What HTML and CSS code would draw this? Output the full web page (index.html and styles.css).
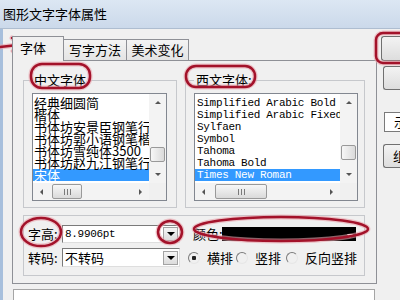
FILE: index.html
```html
<!DOCTYPE html>
<html lang="zh-CN">
<head>
    <meta charset="UTF-8">
    <title>图形文字字体属性</title>
    <link rel="stylesheet" href="styles.css">
</head>
<body>

<div class="window">
    <div class="titlebar">图形文字字体属性</div>

    <div class="body">
        <div class="main">
            <div class="tabs">
                <div class="tab tab-first active">字体</div>
                <div class="tab tab-mid">写字方法</div>
                <div class="tab tab-last">美术变化</div>
            </div>

            <div class="panel">
                <div class="fonts">
                    <fieldset class="group group-cn">
                        <legend>中文字体</legend>
                        <div class="listbox">
                            <div class="list-area">
                                <ul class="items">
                                    <li>经典细圆简</li>
                                    <li>楷体</li>
                                    <li>书体坊安景臣钢笔行</li>
                                    <li>书体坊郭小语钢笔楷</li>
                                    <li>书体坊雪纯体3500</li>
                                    <li>书体坊赵九江钢笔行</li>
                                    <li class="sel">宋体</li>
                                </ul>
                                <div class="vscroll">
                                    <div class="sb-btn"><span class="tri-up"></span></div>
                                    <div class="track"><div class="thumb-v"></div></div>
                                    <div class="sb-btn"><span class="tri-down"></span></div>
                                </div>
                            </div>
                            <div class="hscroll">
                                <div class="sb-btn"><span class="tri-left"></span></div>
                                <div class="htrack"><div class="thumb-h thumb-cn"><span class="grip"></span></div></div>
                                <div class="sb-btn"><span class="tri-right"></span></div>
                                <div class="corner"></div>
                            </div>
                        </div>
                    </fieldset>

                    <fieldset class="group group-en">
                        <legend>西文字体:</legend>
                        <div class="listbox">
                            <div class="list-area">
                                <ul class="items items-en">
                                    <li>Simplified Arabic Bold</li>
                                    <li>Simplified Arabic Fixed</li>
                                    <li>Sylfaen</li>
                                    <li>Symbol</li>
                                    <li>Tahoma</li>
                                    <li>Tahoma Bold</li>
                                    <li class="sel">Times New Roman</li>
                                </ul>
                                <div class="vscroll">
                                    <div class="sb-btn"><span class="tri-up"></span></div>
                                    <div class="track track-en"><div class="thumb-v"></div></div>
                                    <div class="sb-btn"><span class="tri-down"></span></div>
                                </div>
                            </div>
                            <div class="hscroll">
                                <div class="sb-btn"><span class="tri-left"></span></div>
                                <div class="htrack"><div class="thumb-h thumb-en"><span class="grip"></span></div></div>
                                <div class="sb-btn"><span class="tri-right"></span></div>
                                <div class="corner"></div>
                            </div>
                        </div>
                    </fieldset>
                </div>

                <div class="options">
                    <div class="row">
                        <span class="label">字高:</span>
                        <div class="combo">
                            <span class="mono">8.9906pt</span>
                            <span class="drop"><span class="tri-down dark"></span></span>
                        </div>
                        <span class="label color-label">颜色:</span>
                        <div class="color-combo"><span class="tri-down white"></span></div>
                    </div>
                    <div class="row">
                        <span class="label">转码:</span>
                        <div class="combo combo-tall">
                            <span>不转码</span>
                            <span class="drop"><span class="tri-down dark"></span></span>
                        </div>
                        <div class="radios">
                            <label class="radio"><span class="dot checked"></span>横排</label>
                            <label class="radio"><span class="dot"></span>竖排</label>
                            <label class="radio"><span class="dot"></span>反向竖排</label>
                        </div>
                    </div>
                </div>
            </div>

            <div class="preview"></div>
        </div>

        <div class="side">
            <div class="btn btn-ok"></div>
            <div class="btn btn-cancel"></div>
            <div class="side-input">示</div>
            <div class="btn btn-more">组</div>
        </div>
    </div>

    <!-- 红色圈注 -->
    <svg class="marks" width="400" height="300" viewBox="0 0 400 300">
        <defs>
            <g id="m">
                <path d="M0 47 Q11 46 22 44 M12 38 L22 44 L13 51"/>
                <rect x="31" y="64" width="59" height="24" rx="11"/>
                <rect x="186" y="66" width="69" height="21" rx="10"/>
                <rect x="376" y="33" width="40" height="30" rx="7"/>
                <ellipse cx="41" cy="232" rx="20" ry="14"/>
                <ellipse cx="170" cy="232" rx="12" ry="11"/>
                <ellipse cx="281" cy="229" rx="87" ry="12"/>
            </g>
        </defs>
        <use href="#m" class="halo"/>
        <use href="#m" class="ink"/>
    </svg>
</div>

</body>
</html>
```

FILE: styles.css
```css
body {
    margin: 0;
    font-family: "Noto Sans CJK SC", sans-serif;
    font-size: 13px;
    color: #000;
    background: #f0f0f0;
}

.window {
    position: relative;
    width: 400px;
    height: 300px;
    overflow: hidden;
    background: #f0f0f0;
    white-space: nowrap;
}

.titlebar {
    height: 28px;
    line-height: 28px;
    padding-left: 3px;
    background: linear-gradient(#dce7f3, #cbd9ea);
    border-bottom: 1px solid #aebdd0;
}

.body {
    display: flex;
    height: 271px;
    border-left: 3px solid #a7bfdc;
}

.main {
    margin-left: 9px;
    width: 365px;
    flex-shrink: 0;
    padding-top: 7px;
}

/* tabs */
.tabs {
    display: flex;
    align-items: flex-end;
    height: 25px;
    margin-bottom: -1px;
    position: relative;
    z-index: 1;
}

.tab {
    box-sizing: border-box;
    height: 21px;
    margin-bottom: 1px;
    line-height: 20px;
    border: 1px solid #8e9096;
    border-bottom: none;
    background: linear-gradient(#f4f4f4, #e4e4e4);
    text-align: center;
}

.tab + .tab {
    border-left: none;
}

.tab-first { width: 52px; text-align: left; padding-left: 7px; }
.tab-mid { width: 63px; }
.tab-last { width: 62px; }

.tab.active {
    height: 25px;
    margin-bottom: 0;
    line-height: 22px;
    background: #f0f0f0;
}

.panel {
    box-sizing: border-box;
    height: 224px;
    border: 1px solid #8e9096;
    background: #f0f0f0;
    padding: 10px 11px 7px 10px;
}

.fonts {
    display: flex;
    gap: 8px;
}

.group {
    margin: 0;
    min-width: 0;
    box-sizing: border-box;
    border: 1px solid #c6c8cc;
    padding: 4px 9px 6px 8px;
}

.group legend {
    padding: 0 2px;
    line-height: 18px;
}

.group-cn { width: 154px; }
.group-en { width: 180px; padding-right: 6px; }

/* list boxes */
.listbox {
    box-sizing: border-box;
    height: 108px;
    border: 1px solid #828790;
    background: #fff;
    display: flex;
    flex-direction: column;
}

.list-area {
    flex: 1;
    display: flex;
    min-height: 0;
}

.items {
    flex: 1;
    min-width: 0;
    margin: 0;
    padding: 3px 0 0;
    list-style: none;
    overflow: hidden;
}

.items li {
    height: 12px;
    line-height: 12px;
    padding-left: 1px;
    white-space: nowrap;
}

.items-en li {
    font-family: "Liberation Mono", monospace;
    font-size: 11px;
    letter-spacing: -0.3px;
    padding-left: 2px;
}

.items li.sel {
    background: #3399ff;
    color: #fff;
}

.vscroll {
    width: 17px;
    display: flex;
    flex-direction: column;
    background: #f3f3f3;
}

.sb-btn {
    width: 17px;
    height: 17px;
    flex-shrink: 0;
    display: flex;
    align-items: center;
    justify-content: center;
}

.track {
    flex: 1;
    display: flex;
    flex-direction: column;
    justify-content: flex-end;
    padding-bottom: 4px;
}

.track-en { padding-bottom: 6px; }

.thumb-v {
    box-sizing: border-box;
    height: 15px;
    margin: 0 1px;
    border: 1px solid #999;
    border-radius: 2px;
    background: linear-gradient(90deg, #f7f7f7, #dadada);
}

.hscroll {
    height: 17px;
    display: flex;
    background: #f3f3f3;
}

.htrack {
    flex: 1;
    display: flex;
    align-items: center;
}

.thumb-h {
    box-sizing: border-box;
    height: 15px;
    border: 1px solid #999;
    border-radius: 2px;
    background: linear-gradient(#f7f7f7, #dadada);
    display: flex;
    align-items: center;
    justify-content: center;
}

.thumb-cn { width: 30px; margin-left: 2px; }
.thumb-en { width: 52px; margin-left: 3px; }

.grip {
    width: 7px;
    height: 6px;
    background: repeating-linear-gradient(90deg, #7a7a7a 0 1px, transparent 1px 3px);
}

.corner {
    width: 17px;
    background: #f0f0f0;
}

.tri-up,
.tri-down,
.tri-left,
.tri-right {
    width: 0;
    height: 0;
    border: 3px solid transparent;
}

.tri-up { border-bottom: 3px solid #555; border-top-width: 0; }
.tri-down { border-top: 3px solid #555; border-bottom-width: 0; }
.tri-left { border-right: 3px solid #555; border-left-width: 0; }
.tri-right { border-left: 3px solid #555; border-right-width: 0; }

.tri-down.dark { border-top: 4px solid #000; border-left-width: 4px; border-right-width: 4px; }
.tri-down.white { border-top: 4px solid #fff; }

/* bottom options */
.options {
    margin-top: 7px;
    box-sizing: border-box;
    height: 61px;
    border: 1px solid #c6c8cc;
    padding: 9px 0 8px 4px;
    display: flex;
    flex-direction: column;
    gap: 5px;
}

.row {
    display: flex;
    align-items: center;
}

.row > * {
    flex-shrink: 0;
}

.label {
    width: 34px;
    line-height: 18px;
}

.combo {
    box-sizing: border-box;
    width: 118px;
    height: 18px;
    border: 1px solid;
    border-color: #7a7a7a #dedede #dedede #7a7a7a;
    background: #fff;
    display: flex;
    align-items: center;
    padding-left: 2px;
    line-height: 16px;
}

.combo-tall { height: 19px; }

.mono {
    font-family: "Liberation Mono", monospace;
    font-size: 11px;
    letter-spacing: -0.3px;
}

.drop {
    margin-left: auto;
    margin-right: 1px;
    box-sizing: border-box;
    width: 15px;
    height: 14px;
    border: 1px solid #a3a3a3;
    background: linear-gradient(#f5f5f5, #dcdcdc);
    display: flex;
    align-items: center;
    justify-content: center;
}

.color-label {
    margin-left: 13px;
    width: 29px;
}

.color-combo {
    width: 134px;
    height: 14px;
    background: #000;
    display: flex;
    align-items: flex-end;
    justify-content: flex-end;
    padding: 0 3px 3px 0;
    box-sizing: border-box;
}

.radios {
    display: flex;
    margin-left: 8px;
}

.radio {
    display: flex;
    align-items: center;
    gap: 7px;
    margin-right: 3px;
    line-height: 19px;
}

.radio:last-child {
    margin-left: 2px;
}

.dot {
    box-sizing: border-box;
    width: 12px;
    height: 12px;
    border-radius: 50%;
    border: 1px solid;
    border-color: #7a7a7a #e6e6e6 #e6e6e6 #7a7a7a;
    background: #f0f0f0;
}

.dot.checked {
    background: radial-gradient(circle, #222 0 2px, transparent 2.5px), #f0f0f0;
}

.preview {
    margin-top: 5px;
    margin-left: 1px;
    width: 362px;
    height: 20px;
    box-sizing: border-box;
    border: 1px solid #a5a5a5;
    background: #fff;
}

/* right column */
.side {
    flex: 1;
    margin-left: 5px;
    padding-top: 7px;
    display: flex;
    flex-direction: column;
    align-items: flex-start;
}

.btn {
    box-sizing: border-box;
    width: 30px;
    border: 1px solid #707070;
    border-right: none;
    border-radius: 3px 0 0 3px;
    background: linear-gradient(#f3f3f3, #dddddd);
    line-height: 22px;
    padding-left: 9px;
}

.btn-ok { height: 25px; margin-left: -1px; }
.btn-cancel { height: 24px; margin-top: 5px; margin-left: 1px; }
.btn-more { height: 24px; margin-top: 12px; margin-left: 1px; }

.side-input {
    box-sizing: border-box;
    width: 30px;
    height: 20px;
    margin-top: 22px;
    margin-left: 2px;
    border: 1px solid #7a7a7a;
    border-right: none;
    background: #fff;
    line-height: 18px;
    padding-left: 9px;
}

/* annotations */
.marks {
    position: absolute;
    left: 0;
    top: 0;
    pointer-events: none;
}

.marks use {
    fill: none;
    stroke-linecap: round;
    stroke-linejoin: round;
}

.marks .halo {
    stroke: #eaa4ad;
    stroke-width: 5;
    opacity: 0.6;
}

.marks .ink {
    stroke: #a3122a;
    stroke-width: 2.5;
}
```
